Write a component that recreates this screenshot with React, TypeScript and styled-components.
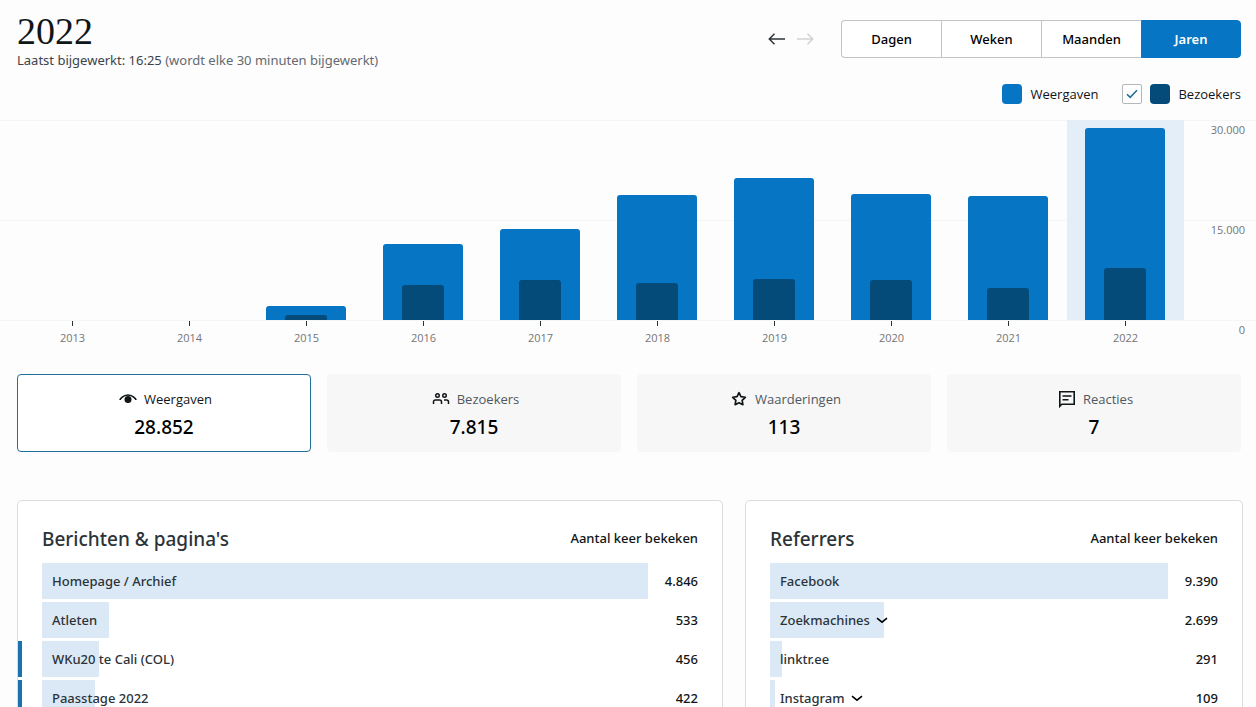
import React, { useState } from "react";
import styled, { createGlobalStyle, css } from "styled-components";

const GlobalStyle = createGlobalStyle`
  *, *::before, *::after { box-sizing: border-box; }
  html { scrollbar-width: none; }
  body {
    margin: 0;
    background: #fdfdfd;
    color: #101517;
    font-family: "Open Sans", "Noto Sans", sans-serif;
    font-size: 13px;
    line-height: 20px;
  }
  button, input { font: inherit; color: inherit; }
`;

const BLUE = "#0675c4";
const NAVY = "#044b7a";
const MEDIUM = `"Noto Sans", "Open Sans", sans-serif`;

/* ---------- header ---------- */

const Header = styled.header`
  display: flex;
  justify-content: space-between;
  align-items: flex-start;
  padding: 12px 15px 0 17px;
`;

const Title = styled.h1`
  margin: 0;
  font-family: "Liberation Serif", serif;
  font-size: 38px;
  font-weight: 400;
  line-height: 38px;
`;

const Updated = styled.p`
  margin: 0;
  color: #3c434a;
  font-family: ${MEDIUM};
`;

const Muted = styled.span`
  color: #646970;
`;

const Controls = styled.div`
  display: flex;
  align-items: center;
  gap: 24px;
  padding-top: 8px;
`;

const Arrows = styled.div`
  display: flex;
  gap: 4px;
`;

const ArrowButton = styled.button`
  display: grid;
  place-items: center;
  width: 24px;
  height: 24px;
  padding: 0;
  border: 0;
  background: none;
  color: #2c3338;
  &:disabled { color: #d0d2d4; }
`;

const Segments = styled.div`
  display: flex;
`;

const Segment = styled.button<{ $active: boolean }>`
  width: 100px;
  height: 38px;
  padding: 0;
  border: 1px solid #c3c4c7;
  border-right-width: 0;
  background: #fff;
  color: #000;
  font-family: ${MEDIUM};
  font-weight: 500;
  &:first-child { border-radius: 4px 0 0 4px; }
  &:last-child { border-radius: 0 4px 4px 0; border-right-width: 1px; }
  ${(p) => p.$active && css`
    background: ${BLUE};
    border-color: ${BLUE};
    color: #fff;
    font-weight: 600;
  `}
`;

/* ---------- legend ---------- */

const Legend = styled.div`
  display: flex;
  justify-content: flex-end;
  gap: 24px;
  padding: 14px 15px 16px;
`;

const LegendItem = styled.label`
  display: flex;
  align-items: center;
  gap: 8px;
`;

const Swatch = styled.span<{ $color: string }>`
  width: 20px;
  height: 20px;
  border-radius: 4px;
  background: ${(p) => p.$color};
`;

const CheckWrap = styled.span`
  display: grid;
  width: 20px;
  height: 20px;
  > * { grid-area: 1 / 1; }
  svg { pointer-events: none; place-self: center; }
`;

const CheckInput = styled.input`
  appearance: none;
  width: 20px;
  height: 20px;
  margin: 0;
  border: 1px solid #b4b7ba;
  border-radius: 2px;
  background: #fff;
`;

/* ---------- chart ---------- */

const Chart = styled.section`
  display: grid;
  grid-template-columns: 1fr 72px;
  padding-bottom: 28px;
  background: repeating-linear-gradient(#f4f5f5 0 1px, transparent 1px 100px) top / 100% 201px no-repeat;
`;

const Years = styled.div`
  display: grid;
  grid-template-columns: repeat(10, 1fr);
  padding-left: 14px;
`;

const Plot = styled.div<{ $selected: boolean }>`
  display: flex;
  height: 200px;
  align-items: flex-end;
  padding: 0 19px 0 18px;
  background: ${(p) => (p.$selected ? "#e3eef8" : "transparent")};
`;

const ViewsBar = styled.div`
  display: flex;
  flex: 1;
  align-items: flex-end;
  padding: 0 19px;
  border-radius: 3px 3px 0 0;
  background: ${BLUE};
`;

const VisitorsBar = styled.div`
  flex: 1;
  border-radius: 3px 3px 0 0;
  background: ${NAVY};
`;

const YearLabel = styled.div`
  display: flex;
  flex-direction: column;
  align-items: center;
  padding-top: 1px;
  color: #757575;
  font-size: 11px;
  line-height: 16px;
  &::before {
    content: "";
    width: 1px;
    height: 5px;
    margin-bottom: 4px;
    background: #2c3338;
  }
`;

const Scale = styled.div`
  display: grid;
  grid-template-rows: 100px 100px auto;
  padding-right: 11px;
  color: #757575;
  font-size: 11px;
  line-height: 20px;
  text-align: right;
`;

/* ---------- stat tabs ---------- */

const Stats = styled.div`
  display: grid;
  grid-template-columns: repeat(4, 1fr);
  gap: 16px;
  padding: 0 15px 0 17px;
`;

const Stat = styled.button<{ $active: boolean }>`
  display: flex;
  flex-direction: column;
  align-items: center;
  height: 78px;
  padding: 12px 0 0;
  border: 1px solid ${(p) => (p.$active ? "#1f6f9c" : "#f7f7f7")};
  border-radius: 4px;
  background: ${(p) => (p.$active ? "#fff" : "#f7f7f7")};
  color: ${(p) => (p.$active ? "#101517" : "#50575e")};
`;

const StatLabel = styled.span`
  display: flex;
  align-items: center;
  gap: 4px;
  line-height: 24px;
  svg { color: #101517; }
`;

const StatValue = styled.span`
  color: #000;
  font-family: ${MEDIUM};
  font-size: 19px;
  font-weight: 500;
  line-height: 32px;
`;

/* ---------- list panels ---------- */

const Panels = styled.div`
  display: grid;
  grid-template-columns: 706fr 498fr;
  gap: 22px;
  padding: 48px 13px 32px 17px;
`;

const Panel = styled.section`
  padding: 11px 0 20px;
  border: 1px solid #dcdcde;
  border-radius: 5px;
  background: #fff;
`;

const Table = styled.table`
  width: 100%;
  table-layout: fixed;
  border-collapse: separate;
  border-spacing: 0 3px;
  color: #2c3338;
  font-family: ${MEDIUM};
  font-weight: 500;
`;

const NameHead = styled.th`
  height: 45px;
  padding: 3px 0 0 24px;
  font-size: 19px;
  font-weight: 500;
  text-align: left;
`;

const ValueHead = styled.th`
  width: 200px;
  padding: 0 24px 0 0;
  color: #101517;
  font-weight: 500;
  text-align: right;
`;

const NameCell = styled.td<{ $marked?: boolean }>`
  height: 36px;
  padding: 0 0 0 20px;
  border-left: 4px solid ${(p) => (p.$marked ? "#1a72b0" : "transparent")};
`;

const Row = styled.div`
  display: flex;
`;

const Track = styled.div`
  flex: 1;
  min-width: 0;
`;

const Bar = styled.div`
  display: flex;
  align-items: center;
  height: 36px;
  border-radius: 1px;
  background: #dbe9f7;
  white-space: nowrap;
`;

const Value = styled.span`
  width: 74px;
  padding-right: 24px;
  color: #101517;
  line-height: 36px;
  text-align: right;
`;

const NameLink = styled.a`
  padding-left: 10px;
  color: inherit;
  text-decoration: none;
`;

const Expander = styled.button`
  display: flex;
  flex: none;
  align-items: center;
  gap: 6px;
  padding: 0 0 0 10px;
  border: 0;
  background: none;
`;

/* ---------- icons ---------- */

const ArrowIcon = ({ flip }: { flip?: boolean }) => (
  <svg width="18" height="14" viewBox="0 0 18 14" fill="none" stroke="currentColor" strokeWidth="1.5" aria-hidden="true">
    {flip ? <path d="M1 7h15.5M11.5 1.8 16.7 7l-5.2 5.2" /> : <path d="M17 7H1.5M6.5 1.8 1.3 7l5.2 5.2" />}
  </svg>
);

const TickIcon = () => (
  <svg width="14" height="12" viewBox="0 0 14 12" fill="none" stroke="#1f6f9c" strokeWidth="1.6" aria-hidden="true">
    <path d="M2 6.2 5.2 9.4 12 2.2" />
  </svg>
);

const ChevronIcon = () => (
  <svg width="12" height="8" viewBox="0 0 12 8" fill="none" stroke="#000" strokeWidth="1.6" aria-hidden="true">
    <path d="M1 2.2 6 6.2l5-4" />
  </svg>
);

const Icon = ({ children }: { children: React.ReactNode }) => (
  <svg width="24" height="24" viewBox="0 0 24 24" fill="currentColor" aria-hidden="true">
    {children}
  </svg>
);

const EyeIcon = () => (
  <Icon>
    <path d="M4 13c0-.3 2.600-5 8-5s8 4.700 8 5" fill="none" stroke="currentColor" strokeWidth="1.6" />
    <circle cx="12" cy="12.600" r="3.500" />
  </Icon>
);

const PeopleIcon = () => (
  <Icon>
    <path
      fillRule="evenodd"
      d="M15.500 9.500a1 1 0 100-2 1 1 0 000 2zm0 1.500a2.500 2.500 0 100-5 2.500 2.500 0 000 5zm-2.250 6v-2a2.750 2.750 0 00-2.750-2.750h-4A2.750 2.750 0 003.750 15v2h1.500v-2c0-.690.560-1.250 1.250-1.250h4c.690 0 1.250.560 1.250 1.250v2h1.500zm7-2v2h-1.500v-2c0-.690-.560-1.250-1.250-1.250H15v-1.500h2.500A2.750 2.750 0 0120.250 15zM9.500 8.500a1 1 0 11-2 0 1 1 0 012 0zm1.500 0a2.500 2.500 0 11-5 0 2.500 2.500 0 015 0z"
    />
  </Icon>
);

const StarIcon = () => (
  <Icon>
    <path
      d="M12 5.700l1.950 3.950 4.350.630-3.150 3.070.740 4.340L12 15.640l-3.890 2.050.740-4.340L5.700 10.280l4.350-.630z"
      fill="none"
      stroke="currentColor"
      strokeWidth="1.7"
      strokeLinejoin="round"
    />
  </Icon>
);

const CommentIcon = () => (
  <Icon>
    <path d="M4.800 19.200V4.800h14.400v12.400H6.800z" fill="none" stroke="currentColor" strokeWidth="1.6" />
    <path d="M7.500 9h9M7.500 12.700h6" stroke="currentColor" strokeWidth="1.5" />
  </Icon>
);

/* ---------- data ---------- */

const MAX = 30000;
const years = [
  { year: 2013, views: 0, visitors: 0 },
  { year: 2014, views: 0, visitors: 0 },
  { year: 2015, views: 2050, visitors: 700 },
  { year: 2016, views: 11400, visitors: 5200 },
  { year: 2017, views: 13700, visitors: 6050 },
  { year: 2018, views: 18750, visitors: 5550 },
  { year: 2019, views: 21300, visitors: 6200 },
  { year: 2020, views: 18900, visitors: 6000 },
  { year: 2021, views: 18650, visitors: 4750 },
  { year: 2022, views: 28852, visitors: 7815 },
];

const periods = ["Dagen", "Weken", "Maanden", "Jaren"];

const stats = [
  { label: "Weergaven", value: "28.852", icon: <EyeIcon /> },
  { label: "Bezoekers", value: "7.815", icon: <PeopleIcon /> },
  { label: "Waarderingen", value: "113", icon: <StarIcon /> },
  { label: "Reacties", value: "7", icon: <CommentIcon /> },
];

type Entry = { name: string; value: number; marked?: boolean; group?: boolean };

const posts: Entry[] = [
  { name: "Homepage / Archief", value: 4846 },
  { name: "Atleten", value: 533 },
  { name: "WKu20 te Cali (COL)", value: 456, marked: true },
  { name: "Paasstage 2022", value: 422, marked: true },
];

const referrers: Entry[] = [
  { name: "Facebook", value: 9390 },
  { name: "Zoekmachines", value: 2699, group: true },
  { name: "linktr.ee", value: 291 },
  { name: "Instagram", value: 109, group: true },
];

const dotted = (n: number) => String(n).replace(/\B(?=(\d{3})+$)/g, ".");

const ListPanel = ({ title, entries }: { title: string; entries: Entry[] }) => (
  <Panel>
    <Table>
      <thead>
        <tr>
          <NameHead scope="col">{title}</NameHead>
          <ValueHead scope="col">Aantal keer bekeken</ValueHead>
        </tr>
      </thead>
      <tbody>
        {entries.map((e) => (
          <tr key={e.name}>
            <NameCell $marked={e.marked} colSpan={2}>
              <Row>
                <Track>
                  <Bar style={{ width: `${(e.value / entries[0].value) * 100}%` }}>
                    {e.group ? (
                      <Expander type="button" aria-expanded="false">
                        {e.name}
                        <ChevronIcon />
                      </Expander>
                    ) : (
                      <NameLink href="#">{e.name}</NameLink>
                    )}
                  </Bar>
                </Track>
                <Value>{dotted(e.value)}</Value>
              </Row>
            </NameCell>
          </tr>
        ))}
      </tbody>
    </Table>
  </Panel>
);

export default function App() {
  const [period, setPeriod] = useState("Jaren");
  const [stat, setStat] = useState("Weergaven");
  const [showVisitors, setShowVisitors] = useState(true);

  return (
    <>
      <GlobalStyle />
      <main>
        <Header>
          <div>
            <Title>2022</Title>
            <Updated>
              Laatst bijgewerkt: 16:25 <Muted>(wordt elke 30 minuten bijgewerkt)</Muted>
            </Updated>
          </div>
          <Controls>
            <Arrows>
              <ArrowButton type="button" aria-label="Vorige"><ArrowIcon /></ArrowButton>
              <ArrowButton type="button" aria-label="Volgende" disabled><ArrowIcon flip /></ArrowButton>
            </Arrows>
            <Segments>
              {periods.map((p) => (
                <Segment key={p} type="button" $active={p === period} onClick={() => setPeriod(p)}>
                  {p}
                </Segment>
              ))}
            </Segments>
          </Controls>
        </Header>

        <Legend>
          <LegendItem as="span">
            <Swatch $color={BLUE} />
            Weergaven
          </LegendItem>
          <LegendItem>
            <CheckWrap>
              <CheckInput
                type="checkbox"
                checked={showVisitors}
                onChange={(e) => setShowVisitors(e.target.checked)}
              />
              {showVisitors && <TickIcon />}
            </CheckWrap>
            <Swatch $color={NAVY} />
            Bezoekers
          </LegendItem>
        </Legend>

        <Chart>
          <Years>
            {years.map((y) => (
              <div key={y.year}>
                <Plot $selected={y.year === 2022}>
                  <ViewsBar style={{ height: `${(y.views / MAX) * 100}%` }}>
                    {showVisitors && y.views > 0 && (
                      <VisitorsBar style={{ height: `${(y.visitors / y.views) * 100}%` }} />
                    )}
                  </ViewsBar>
                </Plot>
                <YearLabel>{y.year}</YearLabel>
              </div>
            ))}
          </Years>
          <Scale>
            <span>30.000</span>
            <span>15.000</span>
            <span>0</span>
          </Scale>
        </Chart>

        <Stats>
          {stats.map((s) => (
            <Stat key={s.label} type="button" $active={s.label === stat} onClick={() => setStat(s.label)}>
              <StatLabel>
                {s.icon}
                {s.label}
              </StatLabel>
              <StatValue>{s.value}</StatValue>
            </Stat>
          ))}
        </Stats>

        <Panels>
          <ListPanel title="Berichten & pagina's" entries={posts} />
          <ListPanel title="Referrers" entries={referrers} />
        </Panels>
      </main>
    </>
  );
}
